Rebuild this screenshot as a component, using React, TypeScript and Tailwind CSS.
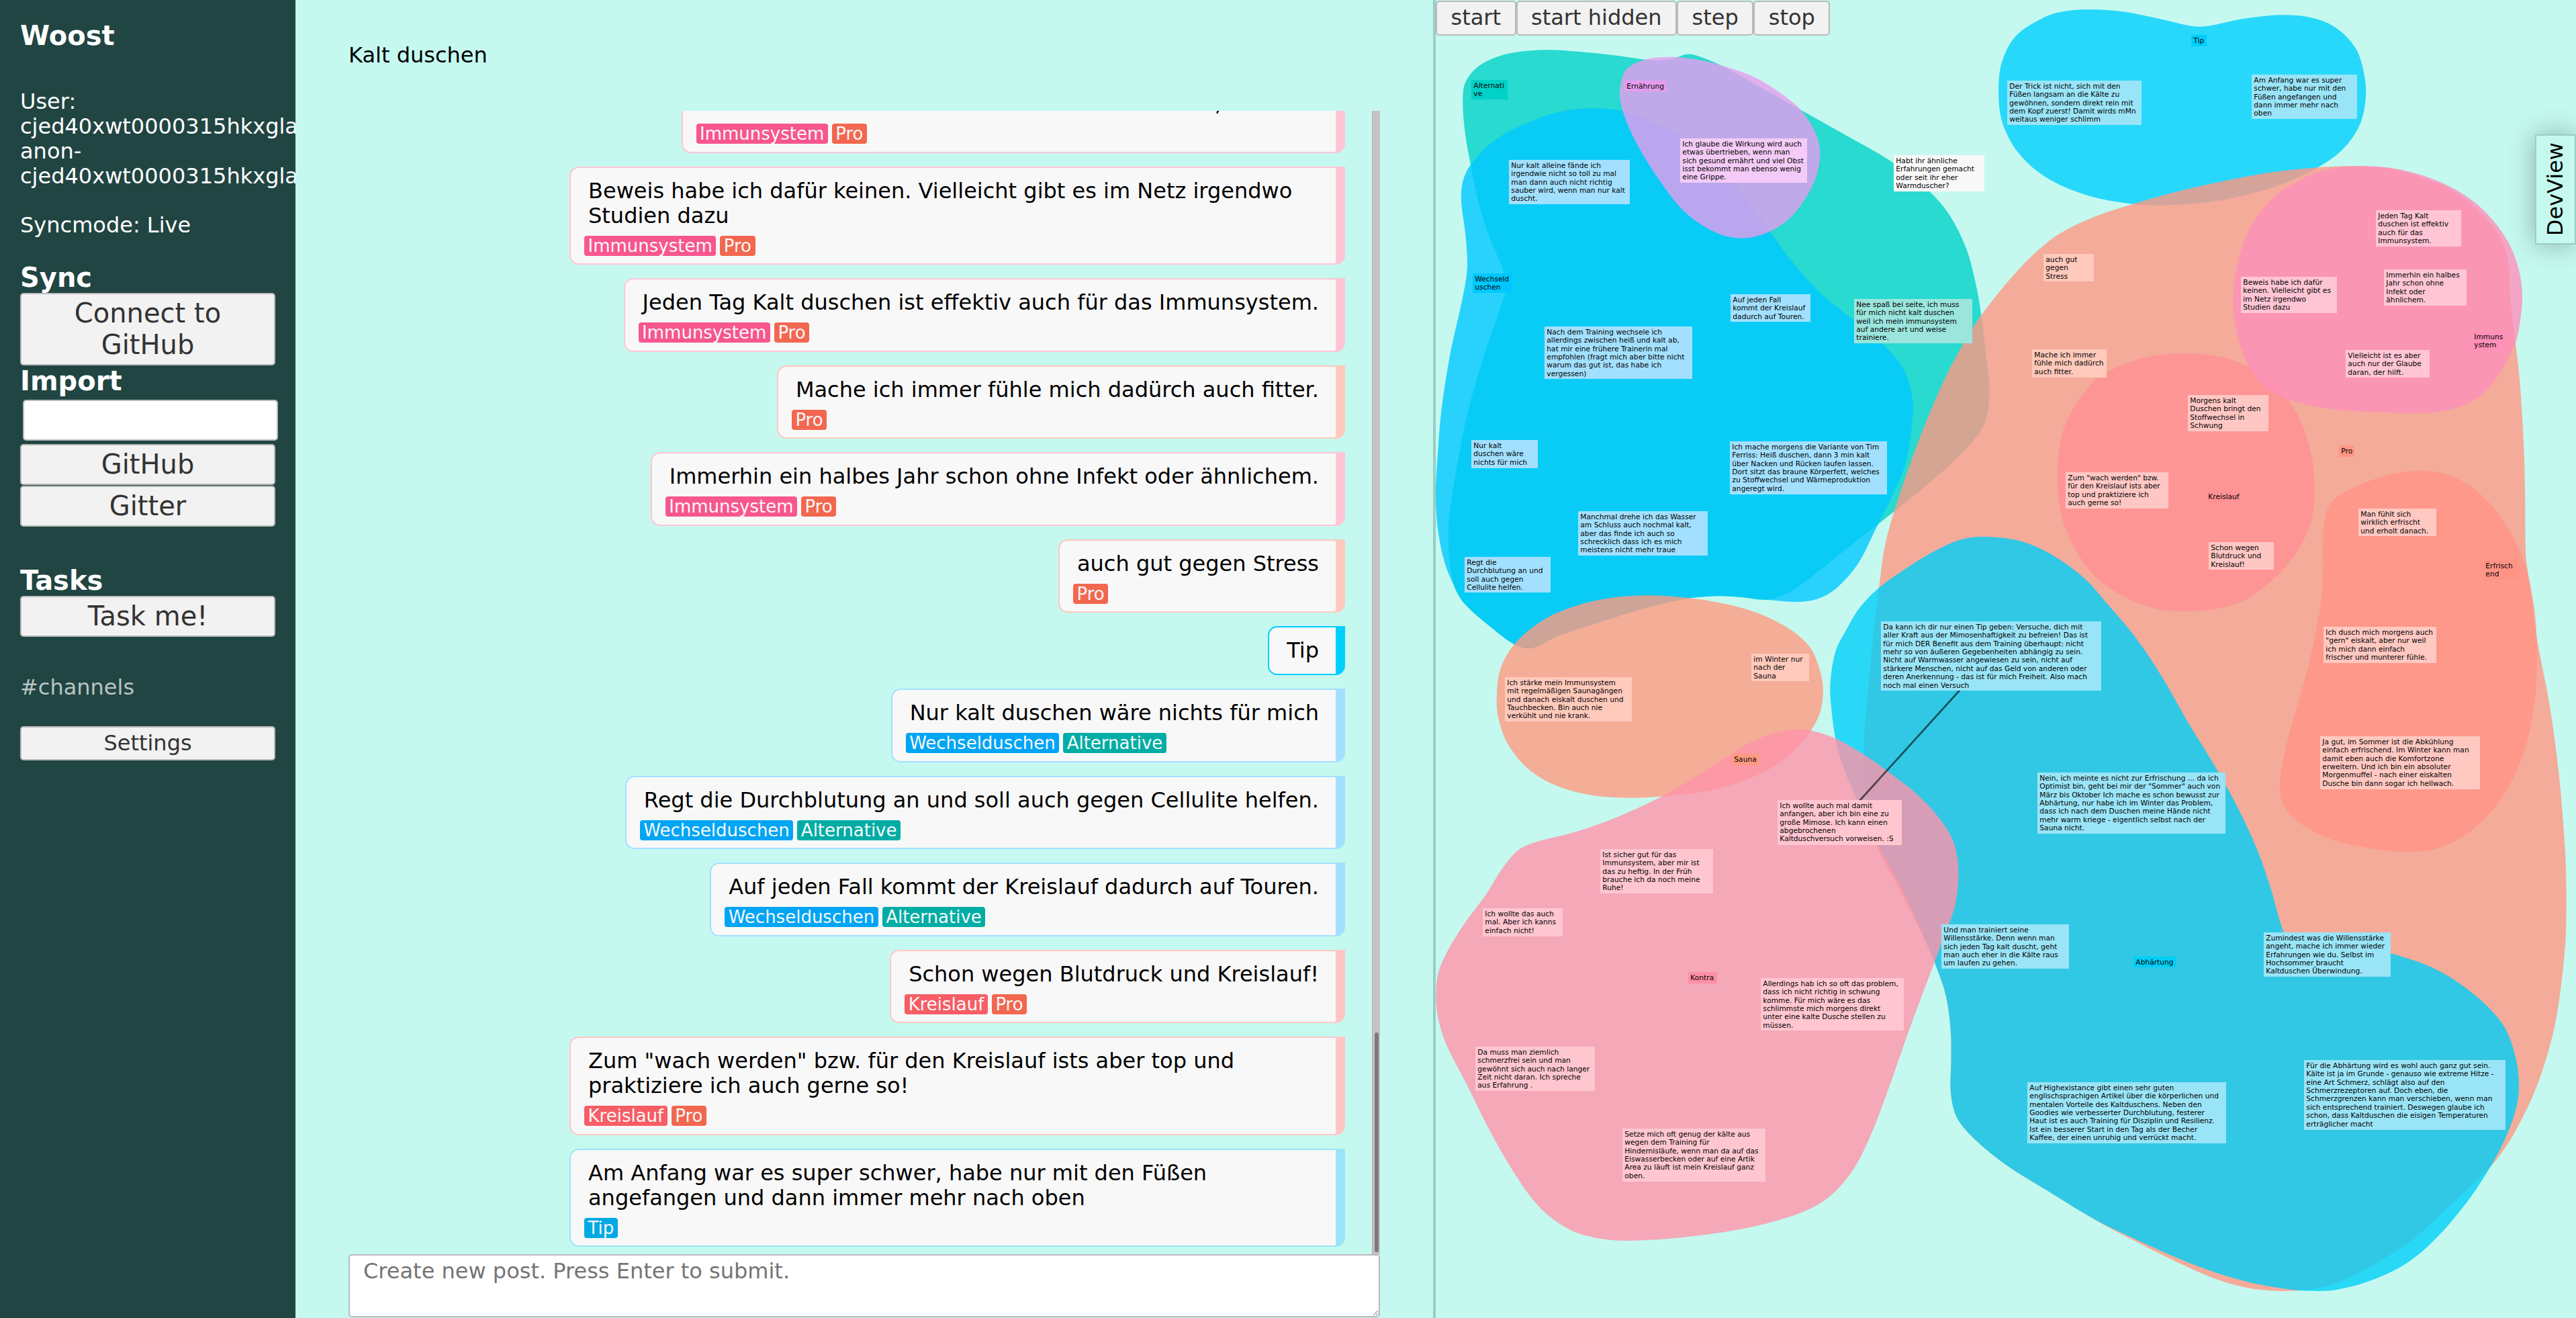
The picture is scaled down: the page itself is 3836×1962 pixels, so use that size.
import React from "react";

type Point = [number, number];

/* ---------- chat data ---------- */

const TAG = {
  immun: { label: "Immunsystem", cls: "bg-[#f8568f]" },
  pro: { label: "Pro", cls: "bg-[#f26750]" },
  wechsel: { label: "Wechselduschen", cls: "bg-[#00a5f5]" },
  alternative: { label: "Alternative", cls: "bg-[#00ada5]" },
  kreislauf: { label: "Kreislauf", cls: "bg-[#f75d65]" },
  tip: { label: "Tip", cls: "bg-[#00a9e4]" },
};

const PINK = "border-[#ffc5d5]";
const PEACH = "border-[#ffc9bb]";
const SKY = "border-[#a3e0ff]";
const ROSE = "border-[#ffc7c4]";

const messages: { lines: string[]; tags: (keyof typeof TAG)[]; border: string }[] = [
  { lines: ["Vielleicht ist es aber auch nur der Glaube daran, der hilft."], tags: ["immun", "pro"], border: PINK },
  { lines: ["Beweis habe ich dafür keinen. Vielleicht gibt es im Netz irgendwo", "Studien dazu"], tags: ["immun", "pro"], border: PINK },
  { lines: ["Jeden Tag Kalt duschen ist effektiv auch für das Immunsystem."], tags: ["immun", "pro"], border: PINK },
  { lines: ["Mache ich immer fühle mich dadürch auch fitter."], tags: ["pro"], border: PEACH },
  { lines: ["Immerhin ein halbes Jahr schon ohne Infekt oder ähnlichem."], tags: ["immun", "pro"], border: PINK },
  { lines: ["auch gut gegen Stress"], tags: ["pro"], border: PEACH },
  { lines: ["Tip"], tags: [], border: "border-[#00cffe]" },
  { lines: ["Nur kalt duschen wäre nichts für mich"], tags: ["wechsel", "alternative"], border: SKY },
  { lines: ["Regt die Durchblutung an und soll auch gegen Cellulite helfen."], tags: ["wechsel", "alternative"], border: SKY },
  { lines: ["Auf jeden Fall kommt der Kreislauf dadurch auf Touren."], tags: ["wechsel", "alternative"], border: SKY },
  { lines: ["Schon wegen Blutdruck und Kreislauf!"], tags: ["kreislauf", "pro"], border: ROSE },
  { lines: ['Zum "wach werden" bzw. für den Kreislauf ists aber top und', "praktiziere ich auch gerne so!"], tags: ["kreislauf", "pro"], border: ROSE },
  { lines: ["Am Anfang war es super schwer, habe nur mit den Füßen", "angefangen und dann immer mehr nach oben"], tags: ["tip"], border: "border-[#9be4f8]" },
];

/* ---------- graph data (window coordinates) ---------- */

const ORIGIN_X = 2138;

const blobs: { color: string; points: Point[] }[] = [
  {
    color: "#00d2c8",
    points: [
      [2178.3, 153], [2182, 123], [2204, 97], [2245, 80], [2300, 74.3], [2349, 76.7], [2404, 82.3], [2448, 88.5],
      [2473, 90], [2495, 86], [2514, 80.5], [2536, 86], [2563, 97.5], [2613, 125], [2684, 165], [2750, 202],
      [2815.6, 240], [2873, 285], [2903, 320], [2928, 370], [2941.7, 420], [2950, 466.7], [2958, 533], [2962.6, 583],
      [2955.4, 630], [2928, 668], [2887, 706.7], [2826.5, 756.7], [2750, 816.7], [2678.5, 873], [2648, 889],
      [2626.4, 893], [2590.7, 888.7], [2558, 887.3], [2514, 890.7], [2459, 902.7], [2393, 922.7], [2316.5, 948],
      [2294.5, 960], [2275.3, 965.3], [2253.4, 958.3], [2217.8, 931.7], [2182, 900], [2165.6, 873], [2157.4, 820],
      [2157.4, 776.7], [2165.6, 716.7], [2185, 616.7], [2212, 523], [2237, 450], [2243, 428], [2239.7, 405],
      [2217.8, 353], [2201.3, 300], [2190.3, 246.7], [2182, 200],
    ],
  },
  {
    color: "#00c8ff",
    points: [
      [2376.8, 161.3], [2415, 165], [2453.6, 178], [2508.4, 206.7], [2579.7, 271.7], [2634.6, 343], [2667.5, 388],
      [2711.4, 436.7], [2760.7, 476.7], [2804.6, 513], [2834.8, 550], [2847.4, 590], [2847.4, 630], [2837.5, 690],
      [2815.6, 743], [2793.6, 786.7], [2766.2, 840], [2733.3, 876.7], [2706, 891.7], [2675.7, 896], [2623.6, 892],
      [2590.7, 888.7], [2558, 887.3], [2514, 890.7], [2459, 902.7], [2393, 922.7], [2316.5, 948], [2294.5, 960],
      [2275.3, 965.3], [2253.4, 958.3], [2217.8, 931.7], [2182, 900], [2171, 883], [2152, 840], [2141, 786.7],
      [2137.9, 733.3], [2141, 676.7], [2146.5, 610], [2160.2, 523.3], [2176.6, 450], [2184.8, 400], [2182, 346.7],
      [2176, 300], [2178.3, 270], [2190.3, 245], [2228.7, 206.7], [2294.5, 175], [2338, 163.7],
    ],
  },
  {
    color: "#e69cee",
    points: [
      [2483.8, 84.7], [2525, 88.3], [2563.3, 97.3], [2612.6, 115], [2651, 138.3], [2681.2, 163.3], [2703, 196.7],
      [2710.3, 230], [2700.4, 273.3], [2670, 320], [2634.6, 345], [2593.5, 354.7], [2552.3, 345], [2508.4, 315],
      [2470, 266.7], [2437, 213.3], [2418, 170], [2412, 136.7], [2420.7, 105], [2445.4, 90],
    ],
  },
  {
    color: "#00cffe",
    points: [
      [3109, 14], [3161, 17.3], [3219, 28.7], [3259.3, 38], [3275.5, 39.7], [3294, 37.7], [3340, 28], [3398, 22.3],
      [3444, 26.7], [3479, 41.7], [3507.8, 71.7], [3520.5, 110], [3522.8, 146.7], [3513.6, 186.7], [3487.6, 223.3],
      [3447, 251.7], [3386.5, 278.3], [3305.6, 298.3], [3221.8, 305.7], [3161, 301.7], [3103.3, 289.3],
      [3045.6, 263.3], [3005, 226.7], [2982, 183.3], [2976.2, 140], [2980.8, 93.3], [3002.2, 53.3], [3045.6, 25],
      [3074.5, 16.7],
    ],
  },
  {
    color: "#ff9783",
    points: [
      [3496.2, 247.3], [3531, 248], [3565, 252], [3610, 265], [3652, 283.5], [3687, 310], [3721.6, 350], [3735, 390],
      [3737.7, 440], [3741.8, 476.7], [3745.8, 510], [3751.6, 560], [3756, 623], [3759, 683], [3760.3, 750],
      [3761, 823], [3765, 856.7], [3772.4, 916.7], [3779.4, 960], [3796.7, 1050], [3811, 1156.7], [3819.8, 1266.7],
      [3821.5, 1333], [3819.8, 1408.5], [3808.3, 1506], [3793.8, 1568.6], [3773.6, 1627], [3744.7, 1685.7],
      [3724.5, 1717], [3704, 1742], [3652, 1791], [3594.5, 1843.7], [3531, 1884.7], [3479, 1910], [3432.7, 1920],
      [3392, 1921.8], [3346, 1917], [3299.8, 1904], [3236, 1876], [3178.5, 1847], [3120.7, 1816.4], [3045.6, 1770.5],
      [2987.8, 1734.5], [2941.7, 1697], [2914.3, 1664], [2905, 1627], [2905.5, 1580], [2905, 1537], [2897.8, 1482.7],
      [2881.4, 1434], [2865, 1396.7], [2826.5, 1320], [2795, 1260], [2780, 1190], [2776, 1133], [2776, 1095],
      [2782.7, 1016.7], [2790.9, 933], [2798, 875], [2807.4, 810], [2826.5, 743], [2859.4, 650], [2897.8, 560],
      [2937, 489], [2958.9, 458], [2993.6, 415], [3034, 373.3], [3068.7, 346.7], [3120.7, 322], [3175.6, 304],
      [3236, 286.7], [3305.6, 270.7], [3380.7, 256.7], [3450, 249.5],
    ],
  },
  {
    color: "#00cff8",
    points: [
      [2955.4, 799], [2919.8, 803.3], [2881.4, 820], [2837.5, 846.7], [2798, 875], [2769, 905], [2749.8, 936.7],
      [2733.3, 970], [2725.6, 1016.7], [2726.7, 1050], [2733.3, 1100], [2744.3, 1140], [2766.2, 1193],
      [2797.4, 1260], [2832, 1323], [2866, 1397], [2881.4, 1434], [2897.8, 1482.7], [2905, 1537], [2905.5, 1580],
      [2905, 1627], [2914.3, 1664], [2941.7, 1697], [2987.8, 1734.5], [3045.6, 1770.5], [3120.7, 1816],
      [3178.5, 1844], [3236, 1870], [3288, 1890.6], [3346, 1908], [3403.8, 1918.7], [3444, 1921.8], [3479, 1920],
      [3531, 1906], [3583, 1881], [3629, 1842], [3675.4, 1787], [3710, 1734.5], [3733, 1689.6], [3747.6, 1646.6],
      [3751, 1615.4], [3745.8, 1572.5], [3727.4, 1525.6], [3687, 1482.7], [3629, 1443.7], [3559.8, 1419],
      [3500, 1407], [3440, 1403], [3408, 1397], [3399, 1383], [3380.7, 1320], [3360.5, 1263], [3334.5, 1206.7],
      [3299.8, 1143], [3259, 1076.7], [3219, 1006.7], [3178.5, 946.7], [3139, 900], [3103, 860], [3057, 826.7],
      [3010.9, 806],
    ],
  },
  {
    color: "#ff9093",
    points: [
      [3253.6, 526], [3300, 530], [3340, 542], [3386.5, 572], [3420, 615], [3438.5, 663], [3446, 712], [3441.4, 776.7],
      [3406.7, 840], [3346, 891.7], [3300, 906], [3256.5, 910], [3215, 907], [3172, 893], [3115, 853],
      [3074.5, 783], [3064, 713], [3074, 636], [3114, 572], [3150, 548], [3200, 531],
    ],
  },
  {
    color: "#fd90ba",
    points: [
      [3507.8, 247.3], [3560, 250], [3611.8, 262.5], [3658, 283], [3698.5, 313], [3733, 356.7], [3750.5, 400],
      [3756, 440], [3753, 476.7], [3745.8, 510], [3721.6, 556.7], [3692.7, 590], [3652, 609], [3606, 615],
      [3554, 614], [3490.5, 611], [3438.5, 603], [3392, 588], [3357.6, 560], [3334.5, 510], [3325.8, 460],
      [3326.5, 430], [3332.5, 390], [3351.8, 336.7], [3386.5, 293], [3427, 266.7], [3467, 252],
    ],
  },
  {
    color: "#ff9486",
    points: [
      [3609, 701], [3646.5, 707], [3687, 730], [3721.6, 766.7], [3747.6, 810], [3763, 850], [3772, 893], [3776.5, 933],
      [3778, 983], [3773.6, 1050], [3756, 1126.7], [3721.6, 1193], [3675.4, 1240], [3629, 1263], [3588.7, 1268],
      [3542.5, 1265], [3473, 1250], [3427, 1226.7], [3401, 1200], [3395, 1166.7], [3403.8, 1113], [3424, 1040],
      [3441, 976.7], [3453, 916.7], [3458.7, 866.7], [3460.4, 783], [3470, 750], [3493.4, 731.7], [3536.7, 713],
      [3577, 703],
    ],
  },
  {
    color: "#ff9a80",
    points: [
      [2453.6, 886.3], [2514, 890], [2574, 900], [2623.6, 915], [2667.5, 938], [2695, 963], [2708.6, 993],
      [2714.6, 1023], [2711.4, 1056.7], [2695, 1090], [2662, 1126.7], [2612.6, 1156], [2546.8, 1176.7], [2481, 1185],
      [2426.2, 1187.7], [2366, 1183], [2311, 1166.7], [2272.6, 1141.7], [2245, 1106.7], [2231.5, 1070],
      [2228.7, 1040], [2234, 996.7], [2256, 958], [2300, 921.7], [2349.4, 901], [2398.7, 890],
    ],
  },
  {
    color: "#ff93aa",
    points: [
      [2678.5, 1085.7], [2703, 1089], [2738.8, 1101.7], [2782.7, 1128], [2815.6, 1151.7], [2854, 1181.7],
      [2886.9, 1216.7], [2908.8, 1253], [2916.5, 1296.7], [2911.6, 1346.7], [2902, 1376.7], [2889.6, 1408.5],
      [2878.7, 1437.8], [2843, 1533], [2810, 1627], [2782.7, 1697], [2755, 1748], [2716.9, 1787], [2667.5, 1810.6],
      [2596, 1829], [2508.4, 1841.8], [2426.2, 1846.9], [2382.3, 1843.7], [2338.4, 1831], [2294.5, 1799],
      [2256, 1748], [2217.8, 1681.8], [2184.8, 1615.4], [2154.7, 1556.9], [2142, 1517.8], [2138.4, 1482.7],
      [2142, 1447.6], [2157.4, 1412.5], [2184, 1370], [2212, 1333], [2237, 1293], [2261.6, 1265], [2289, 1253],
      [2344, 1239], [2404, 1218], [2470, 1188], [2514, 1163], [2557.8, 1135], [2601.7, 1108], [2640, 1091.7],
    ],
  },
];

const G_SKY = "bg-[#a3e0ff]";
const G_AQUA = "bg-[#9ae4f7]";
const G_PEACH = "bg-[#ffc9bb]";
const G_PINK = "bg-[#ffc5d5]";
const G_ROSE = "bg-[#ffc7c4]";
const G_BLUSH = "bg-[#ffc8c1]";
const G_KONTRA = "bg-[#ffc6d0]";

/* x, y, width, height, background, text */
const nodes: [number, number, number, number, string, string][] = [
  [2191, 119, 54, 29, "bg-[#00d2c8]", "Alternati\nve"],
  [2419, 120, 63, 16, "bg-[#e69cee]", "Ernährung"],
  [2502, 206, 189, 66, "bg-[#f3cbf6]", "Ich glaube die Wirkung wird auch\netwas übertrieben, wenn man\nsich gesund ernährt und viel Obst\nisst bekommt man ebenso wenig\neine Grippe."],
  [2247, 238, 180, 66, G_SKY, "Nur kalt alleine fände ich\nirgendwie nicht so toll zu mal\nman dann auch nicht richtig\nsauber wird, wenn man nur kalt\nduscht."],
  [2820, 231, 135, 54, "bg-[#f8f8f8]", "Habt ihr ähnliche\nErfahrungen gemacht\noder seit ihr eher\nWarmduscher?"],
  [2193, 407, 60, 29, "bg-[#00c8ff]", "Wechseld\nuschen"],
  [2577, 438, 119, 41, G_SKY, "Auf jeden Fall\nkommt der Kreislauf\ndadurch auf Touren."],
  [2761, 445, 176, 66, "bg-[#9be5dd]", "Nee spaß bei seite, ich muss\nfür mich nicht kalt duschen\nweil ich mein immunsystem\nauf andere art und weise\ntrainiere."],
  [2300, 486, 220, 78, G_SKY, "Nach dem Training wechsele ich\nallerdings zwischen heiß und kalt ab,\nhat mir eine frühere Trainerin mal\nempfohlen (fragt mich aber bitte nicht\nwarum das gut ist, das habe ich\nvergessen)"],
  [2191, 655, 99, 42, G_SKY, "Nur kalt\nduschen wäre\nnichts für mich"],
  [2576, 657, 234, 79, G_SKY, "Ich mache morgens die Variante von Tim\nFerriss: Heiß duschen, dann 3 min kalt\nüber Nacken und Rücken laufen lassen.\nDort sitzt das braune Körperfett, welches\nzu Stoffwechsel und Wärmeproduktion\nangeregt wird."],
  [2350, 761, 193, 66, G_SKY, "Manchmal drehe ich das Wasser\nam Schluss auch nochmal kalt,\naber das finde ich auch so\nschrecklich dass ich es mich\nmeistens nicht mehr traue"],
  [2181, 829, 128, 53, G_SKY, "Regt die\nDurchblutung an und\nsoll auch gegen\nCellulite helfen."],
  [2801, 925, 328, 103, G_AQUA, "Da kann ich dir nur einen Tip geben: Versuche, dich mit\naller Kraft aus der Mimosenhaftigkeit zu befreien! Das ist\nfür mich DER Benefit aus dem Training überhaupt: nicht\nmehr so von äußeren Gegebenheiten abhängig zu sein.\nNicht auf Warmwasser angewiesen zu sein, nicht auf\nstärkere Menschen, nicht auf das Geld von anderen oder\nderen Anerkennung - das ist für mich Freiheit. Also mach\nnoch mal einen Versuch"],
  [2989, 120, 200, 66, G_AQUA, "Der Trick ist nicht, sich mit den\nFüßen langsam an die Kälte zu\ngewöhnen, sondern direkt rein mit\ndem Kopf zuerst! Damit wirds mMn\nweitaus weniger schlimm"],
  [3263, 52, 23, 17, "bg-[#00cffe]", "Tip"],
  [3353, 111, 157, 66, G_AQUA, "Am Anfang war es super\nschwer, habe nur mit den\nFüßen angefangen und\ndann immer mehr nach\noben"],
  [3538, 313, 127, 54, G_PINK, "Jeden Tag Kalt\nduschen ist effektiv\nauch für das\nImmunsystem."],
  [3043, 378, 75, 41, G_PEACH, "auch gut\ngegen\nStress"],
  [3337, 412, 143, 54, G_PINK, "Beweis habe ich dafür\nkeinen. Vielleicht gibt es\nim Netz irgendwo\nStudien dazu"],
  [3550, 401, 123, 54, G_PINK, "Immerhin ein halbes\nJahr schon ohne\nInfekt oder\nähnlichem."],
  [3681, 493, 53, 29, "bg-[#ff90b8]", "Immuns\nystem"],
  [3493, 521, 125, 41, G_PINK, "Vielleicht ist es aber\nauch nur der Glaube\ndaran, der hilft."],
  [3026, 520, 111, 42, G_PEACH, "Mache ich immer\nfühle mich dadürch\nauch fitter."],
  [3258, 588, 120, 54, G_ROSE, "Morgens kalt\nDuschen bringt den\nStoffwechsel in\nSchwung"],
  [3483, 663, 23, 17, "bg-[#ff9783]", "Pro"],
  [3285, 731, 54, 17, "bg-[#ff9093]", "Kreislauf"],
  [3076, 703, 153, 54, G_ROSE, 'Zum "wach werden" bzw.\nfür den Kreislauf ists aber\ntop und praktiziere ich\nauch gerne so!'],
  [3289, 807, 97, 41, G_ROSE, "Schon wegen\nBlutdruck und\nKreislauf!"],
  [3512, 757, 116, 41, G_BLUSH, "Man fühlt sich\nwirklich erfrischt\nund erholt danach."],
  [3698, 834, 50, 29, "bg-[#ff9486]", "Erfrisch\nend"],
  [3460, 933, 168, 54, G_BLUSH, 'Ich dusch mich morgens auch\n"gern" eiskalt, aber nur weil\nich mich dann einfach\nfrischer und munterer fühle.'],
  [2608, 973, 86, 41, G_PEACH, "im Winter nur\nnach der\nSauna"],
  [2241, 1008, 189, 66, G_PEACH, "Ich stärke mein Immunsystem\nmit regelmäßigen Saunagängen\nund danach eiskalt duschen und\nTauchbecken. Bin auch nie\nverkühlt und nie krank."],
  [2579, 1122, 40, 17, "bg-[#ff9a80]", "Sauna"],
  [2647, 1191, 185, 67, G_KONTRA, "Ich wollte auch mal damit\nanfangen, aber ich bin eine zu\ngroße Mimose. Ich kann einen\nabgebrochenen\nKaltduschversuch vorweisen. :S"],
  [2383, 1264, 168, 66, G_KONTRA, "Ist sicher gut für das\nImmunsystem, aber mir ist\ndas zu heftig. In der Früh\nbrauche ich da noch meine\nRuhe!"],
  [2208, 1352, 119, 42, G_KONTRA, "Ich wollte das auch\nmal. Aber ich kanns\neinfach nicht!"],
  [3034, 1150, 280, 91, G_AQUA, 'Nein, ich meinte es nicht zur Erfrischung ... da ich\nOptimist bin, geht bei mir der "Sommer" auch von\nMärz bis Oktober Ich mache es schon bewusst zur\nAbhärtung, nur habe ich im Winter das Problem,\ndass ich nach dem Duschen meine Hände nicht\nmehr warm kriege - eigentlich selbst nach der\nSauna nicht.'],
  [3455, 1096, 238, 79, G_BLUSH, "Ja gut, im Sommer ist die Abkühlung\neinfach erfrischend. Im Winter kann man\ndamit eben auch die Komfortzone\nerweitern. Und ich bin ein absoluter\nMorgenmuffel - nach einer eiskalten\nDusche bin dann sogar ich hellwach."],
  [2514, 1447, 43, 17, "bg-[#ff8fa6]", "Kontra"],
  [2622, 1456, 213, 78, G_KONTRA, "Allerdings hab ich so oft das problem,\ndass ich nicht richtig in schwung\nkomme. Für mich wäre es das\nschlimmste mich morgens direkt\nunter eine kalte Dusche stellen zu\nmüssen."],
  [2197, 1558, 178, 66, G_KONTRA, "Da muss man ziemlich\nschmerzfrei sein und man\ngewöhnt sich auch nach langer\nZeit nicht daran. Ich spreche\naus Erfahrung ."],
  [2416, 1680, 213, 79, G_KONTRA, "Setze mich oft genug der kälte aus\nwegen dem Training für\nHindernisläufe, wenn man da auf das\nEiswasserbecken oder auf eine Artik\nArea zu läuft ist mein Kreislauf ganz\noben."],
  [2891, 1376, 190, 66, G_AQUA, "Und man trainiert seine\nWillensstärke. Denn wenn man\nsich jeden Tag kalt duscht, geht\nman auch eher in die Kälte raus\num laufen zu gehen."],
  [3177, 1424, 63, 16, "bg-[#00cff8]", "Abhärtung"],
  [3371, 1388, 189, 66, G_AQUA, "Zumindest was die Willensstärke\nangeht, mache ich immer wieder\nErfahrungen wie du. Selbst im\nHochsommer braucht\nKaltduschen Überwindung."],
  [3019, 1611, 296, 91, G_AQUA, "Auf Highexistance gibt einen sehr guten\nenglischsprachigen Artikel über die körperlichen und\nmentalen Vorteile des Kaltduschens. Neben den\nGoodies wie verbesserter Durchblutung, festerer\nHaut ist es auch Training für Disziplin und Resilienz.\nIst ein besserer Start in den Tag als der Becher\nKaffee, der einen unruhig und verrückt macht."],
  [3431, 1578, 300, 104, G_AQUA, "Für die Abhärtung wird es wohl auch ganz gut sein.\nKälte ist ja im Grunde - genauso wie extreme Hitze -\neine Art Schmerz, schlägt also auf den\nSchmerzrezeptoren auf. Doch eben, die\nSchmerzgrenzen kann man verschieben, wenn man\nsich entsprechend trainiert. Deswegen glaube ich\nschon, dass Kaltduschen die eisigen Temperaturen\nerträglicher macht"],
];

/* Closed Catmull-Rom curve as cubic Béziers. */
function smoothPath(pts: Point[]): string {
  const n = pts.length;
  let d = `M${pts[0][0]},${pts[0][1]}`;
  for (let i = 0; i < n; i++) {
    const p0 = pts[(i - 1 + n) % n];
    const p1 = pts[i];
    const p2 = pts[(i + 1) % n];
    const p3 = pts[(i + 2) % n];
    const seg = Math.hypot(p2[0] - p1[0], p2[1] - p1[1]);
    const t1 = seg / (Math.hypot(p1[0] - p0[0], p1[1] - p0[1]) + seg) / 3;
    const t2 = seg / (Math.hypot(p3[0] - p2[0], p3[1] - p2[1]) + seg) / 3;
    const c1 = [p1[0] + (p2[0] - p0[0]) * t1, p1[1] + (p2[1] - p0[1]) * t1];
    const c2 = [p2[0] - (p3[0] - p1[0]) * t2, p2[1] - (p3[1] - p1[1]) * t2];
    d += `C${c1[0].toFixed(1)},${c1[1].toFixed(1)} ${c2[0].toFixed(1)},${c2[1].toFixed(1)} ${p2[0]},${p2[1]}`;
  }
  return d + "Z";
}

/* ---------- components ---------- */

function SideButton({ children, small }: { children: React.ReactNode; small?: boolean }) {
  return (
    <button
      className={
        "block w-[380px] rounded-[5px] border-2 border-[#b9b9b9] bg-[#f2f2f2] py-[5px] text-center text-[#333] " +
        (small ? "text-[32px] leading-[37px]" : "text-[40px] leading-[47px]")
      }
    >
      {children}
    </button>
  );
}

function Sidebar() {
  return (
    <aside className="w-[440px] shrink-0 overflow-hidden bg-[#214542] pt-[30px] pl-[30px] text-[32px] leading-[37.3px] text-white">
      <h2 className="text-[40px] leading-[46.5px] font-bold">Woost</h2>
      <div className="mt-[56px]">
        <div>User:</div>
        <div>cjed40xwt0000315hkxgla</div>
        <div>anon-</div>
        <div>cjed40xwt0000315hkxgla</div>
      </div>
      <div className="mt-[35px]">Syncmode: Live</div>
      <h2 className="mt-[36px] text-[40px] leading-[46.5px] font-bold">Sync</h2>
      <SideButton>
        Connect to
        <br />
        GitHub
      </SideButton>
      <h2 className="text-[40px] leading-[46.5px] font-bold">Import</h2>
      <input className="my-1 ml-1 block h-[61px] w-[380px] rounded-[5px] border-2 border-[#b9b9b9] bg-white" />
      <div className="flex flex-col gap-px pt-px">
        <SideButton>GitHub</SideButton>
        <SideButton>Gitter</SideButton>
      </div>
      <h2 className="mt-[57px] text-[40px] leading-[46.5px] font-bold">Tasks</h2>
      <SideButton>Task me!</SideButton>
      <div className="mt-[57px] text-[#b8c4c3]">#channels</div>
      <div className="mt-[38px]">
        <SideButton small>Settings</SideButton>
      </div>
    </aside>
  );
}

function Chat() {
  return (
    <main className="flex w-[1694px] shrink-0 flex-col pr-[79px] pl-[79px] text-[32px] leading-[37px]">
      <div className="flex h-[165px] items-start pt-[64px]">Kalt duschen</div>
      <div className="flex h-[1702px] shrink-0">
        <div className="flex flex-1 flex-col items-end justify-end gap-5 overflow-hidden pr-10 pb-[11px]">
          {messages.map((m, i) => (
            <div
              key={i}
              className={
                "flex max-w-[1155px] shrink-0 flex-col rounded-l-[14px] rounded-br-[14px] border-2 border-r-[14px] bg-[#f8f8f8] pt-4 " +
                (m.tags.length ? "pb-[11.5px] " : "pb-4 ") +
                m.border +
                (m.lines.length > 1 ? " w-[1155px]" : "")
              }
            >
              <div className="pr-[25px] pl-[26px] whitespace-nowrap">
                {m.lines.map((l) => (
                  <div key={l}>{l}</div>
                ))}
              </div>
              {m.tags.length > 0 && (
                <div className="mt-[11px] flex gap-[6px] pl-5">
                  {m.tags.map((t) => (
                    <span
                      key={t}
                      className={"rounded-[4px] px-[5.5px] text-[26px] leading-[30px] text-[#f8f8f8] " + TAG[t].cls}
                    >
                      {TAG[t].label}
                    </span>
                  ))}
                </div>
              )}
            </div>
          ))}
        </div>
        <div className="flex w-3 flex-col items-center justify-end border-l border-[#b0b0b0] bg-[#c3c3c3] pb-[3px]">
          <div className="h-[327px] w-[6px] rounded-full bg-[#7b7b7b]" />
        </div>
      </div>
      <textarea
        className="block h-[94px] w-[1536px] resize rounded-[5px] border-2 border-[#b9b9b9] bg-white px-5 pt-[5px] placeholder:text-[#757575]"
        placeholder="Create new post. Press Enter to submit."
      />
    </main>
  );
}

function Graph() {
  return (
    <section className="relative flex-1 overflow-hidden border-l-4 border-[#99cec6]">
      <svg className="absolute inset-0 h-full w-full" viewBox="2138 0 1698 1962">
        {blobs.map((b, i) => (
          <path key={i} d={smoothPath(b.points)} fill={b.color} fillOpacity={0.8} />
        ))}
        <line x1={2965} y1={976} x2={2739.6} y2={1224.5} stroke="#000" strokeOpacity={0.6} strokeWidth={2.8} />
      </svg>
      {nodes.map(([x, y, w, h, bg, text]) => (
        <div
          key={text}
          className={
            "absolute origin-top-left scale-[0.33333] px-[10px] pt-[6px] text-[32px] leading-[37.3px] whitespace-pre text-black " +
            bg
          }
          style={{ left: x - ORIGIN_X, top: y, width: w * 3, height: h * 3 }}
        >
          {text}
        </div>
      ))}
      <div className="relative flex pt-px">
        {["start", "start hidden", "step", "stop"].map((l) => (
          <button
            key={l}
            className="rounded-[5px] border-2 border-[#b9b9b9] bg-[#f2f2f2] px-[20.5px] py-[5px] text-[32px] leading-[37.5px] text-[#333]"
          >
            {l}
          </button>
        ))}
      </div>
      <div className="absolute top-[200px] right-0 flex h-[164px] w-[61px] items-center justify-center border-2 border-[#99cec6] bg-[#c5f9f0] shadow-[0_0_40px_rgba(0,0,0,0.3)]">
        <span className="rotate-180 text-[32px] leading-[37px] [writing-mode:vertical-rl]">DevView</span>
      </div>
    </section>
  );
}

export default function App() {
  return (
    <div className="flex h-[1962px] w-[3836px] overflow-hidden bg-[#c5f9f0] font-['DejaVu_Sans',sans-serif] text-black">
      <Sidebar />
      <Chat />
      <Graph />
    </div>
  );
}
